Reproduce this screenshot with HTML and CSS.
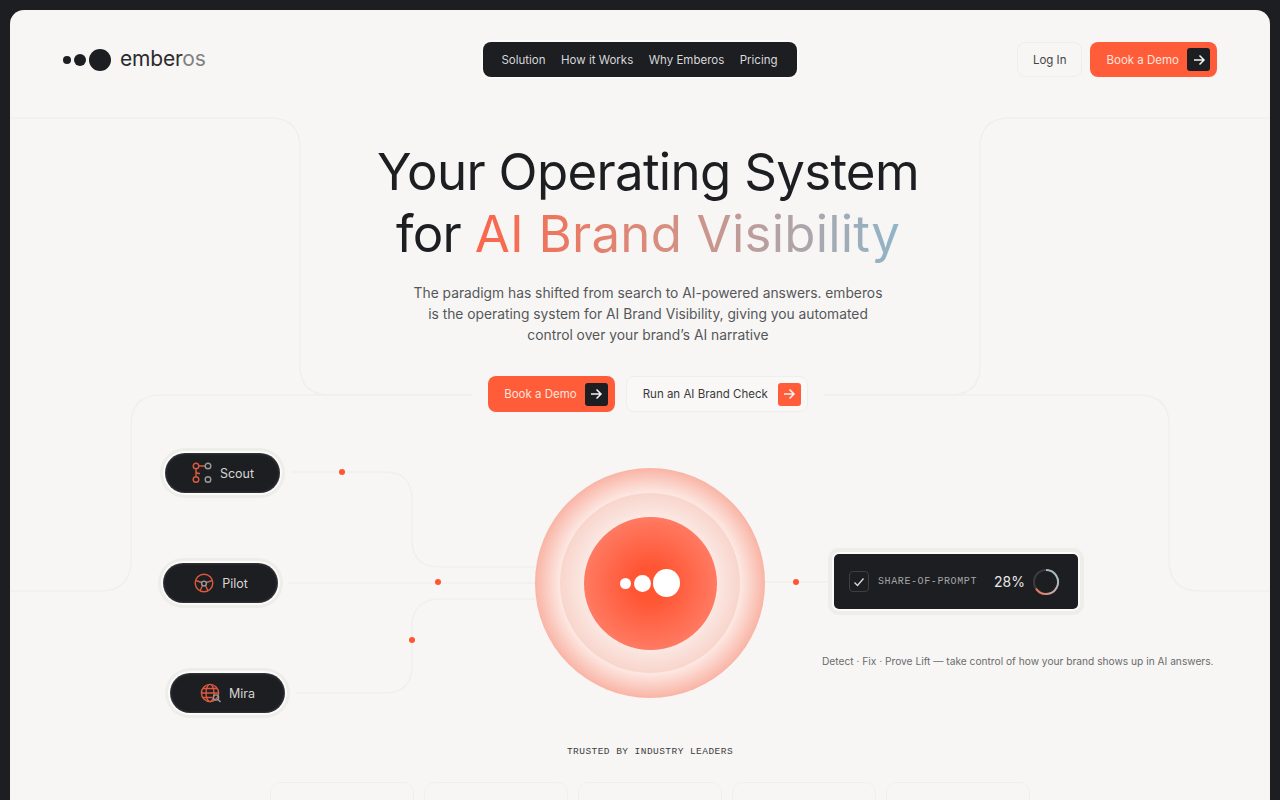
FILE: index.html
```html
<!DOCTYPE html>
<html lang="en">

<head>
    <meta charset="UTF-8">
    <meta name="viewport" content="width=device-width, initial-scale=1.0">
    <title>emberos</title>
    <link rel="stylesheet" href="styles.css">
</head>

<body>
    <div class="frame">
        <!-- background lines, coordinates are page coordinates -->
        <svg class="lines" width="1280" height="800" viewBox="0 0 1280 800" fill="none">
            <path class="line" d="M10 118H270Q300 118 300 148V365Q300 395 330 395H472"/>
            <path class="line" d="M824 395H950Q980 395 980 365V148Q980 118 1010 118H1270"/>
            <path class="line" d="M10 591H100Q131 591 131 560V425Q131 395 161 395H472"/>
            <path class="line" d="M824 395H1139Q1169 395 1169 425V560Q1169 591 1199 591H1270"/>
            <path class="line" d="M292 472H385Q412 472 412 500V540Q412 567 440 567H536"/>
            <path class="line" d="M288 583H536"/>
            <path class="line" d="M296 693H385Q412 693 412 665V627Q412 599 440 599H536"/>
            <path class="line" d="M764 582H830"/>
            <circle class="dot" cx="342" cy="472" r="3"/>
            <circle class="dot" cx="438" cy="582" r="3"/>
            <circle class="dot" cx="412" cy="640" r="3"/>
            <circle class="dot" cx="796" cy="582" r="3"/>
        </svg>

        <header class="header">
            <a class="logo" href="#">
                <span class="logo-dots">
                    <span class="logo-dot small"></span>
                    <span class="logo-dot medium"></span>
                    <span class="logo-dot large"></span>
                </span>
                <span class="logo-text">ember<span class="logo-os">os</span></span>
            </a>
            <nav class="nav">
                <a href="#">Solution</a>
                <a href="#">How it Works</a>
                <a href="#">Why Emberos</a>
                <a href="#">Pricing</a>
            </nav>
            <div class="header-actions">
                <a class="btn btn-ghost" href="#">Log In</a>
                <a class="btn btn-primary" href="#">Book a Demo
                    <span class="arrow arrow-dark">
                        <svg width="14" height="14" viewBox="0 0 14 14" fill="none"><path d="M2 7H12M7.5 2.5L12 7L7.5 11.5"/></svg>
                    </span>
                </a>
            </div>
        </header>

        <section class="hero">
            <h1>Your Operating System<br>for <span class="gradient-text">AI Brand Visibility</span></h1>
            <p>The paradigm has shifted from search to AI-powered answers. emberos<br>is the operating system for AI Brand Visibility, giving you automated<br>control over your brand’s AI narrative</p>
            <div class="hero-actions">
                <a class="btn btn-primary" href="#">Book a Demo
                    <span class="arrow arrow-dark">
                        <svg width="14" height="14" viewBox="0 0 14 14" fill="none"><path d="M2 7H12M7.5 2.5L12 7L7.5 11.5"/></svg>
                    </span>
                </a>
                <a class="btn btn-light" href="#">Run an AI Brand Check
                    <span class="arrow arrow-orange">
                        <svg width="14" height="14" viewBox="0 0 14 14" fill="none"><path d="M2 7H12M7.5 2.5L12 7L7.5 11.5"/></svg>
                    </span>
                </a>
            </div>
        </section>

        <section class="diagram">
            <div class="pill pill-scout">
                <svg class="pill-icon" width="22" height="22" viewBox="0 0 22 22" fill="none">
                    <g class="ic-orange">
                        <circle cx="5" cy="4" r="2.8"/>
                        <circle cx="5" cy="17.5" r="2.8"/>
                        <path d="M5 7V14.5M8 4H14M5 9Q5 11.5 8 11.5H9"/>
                    </g>
                    <g class="ic-grey">
                        <circle cx="17" cy="4" r="2.8"/>
                        <circle cx="17" cy="17.5" r="2.8"/>
                    </g>
                </svg>
                Scout
            </div>
            <div class="pill pill-pilot">
                <svg class="pill-icon" width="22" height="22" viewBox="0 0 22 22" fill="none">
                    <g class="ic-orange">
                        <circle cx="11" cy="11" r="8.8"/>
                        <path d="M2.6 8.5L8.8 10.5M13.2 10.5L19.4 8.5M9.6 13.2L7 19M12.4 13.2L15 19"/>
                    </g>
                    <circle class="ic-grey" cx="11" cy="11.5" r="2.4"/>
                </svg>
                Pilot
            </div>
            <div class="pill pill-mira">
                <svg class="pill-icon" width="22" height="22" viewBox="0 0 22 22" fill="none">
                    <g class="ic-orange">
                        <circle cx="10" cy="11" r="8.6"/>
                        <ellipse cx="10" cy="11" rx="4" ry="8.6"/>
                        <path d="M1.6 11H18.6M3 6.5H17M3 15.5H12"/>
                    </g>
                    <g class="ic-grey">
                        <circle cx="16" cy="15.5" r="2.6"/>
                        <path d="M18 17.5L20.5 20"/>
                    </g>
                </svg>
                Mira
            </div>

            <div class="core">
                <div class="core-mid">
                    <div class="core-inner">
                        <span class="core-dot small"></span>
                        <span class="core-dot medium"></span>
                        <span class="core-dot large"></span>
                    </div>
                </div>
            </div>

            <div class="metric">
                <span class="check">
                    <svg width="12" height="12" viewBox="0 0 12 12" fill="none"><path d="M1.5 6.5L4.5 9.5L10.5 2.5"/></svg>
                </span>
                <span class="metric-label">SHARE-OF-PROMPT</span>
                <span class="metric-value">28%</span>
                <svg class="metric-ring" width="28" height="28" viewBox="0 0 28 28" fill="none">
                    <defs>
                        <linearGradient id="ringGrad" x1="1" y1="0" x2="0" y2="1">
                            <stop offset="0" stop-color="#9fc0d0"/>
                            <stop offset="0.6" stop-color="#c9a9a0"/>
                            <stop offset="1" stop-color="#f0654a"/>
                        </linearGradient>
                    </defs>
                    <circle cx="14" cy="14" r="12" stroke="#3a3c41" stroke-width="2"/>
                    <path d="M14 2A12 12 0 1 1 4 20.6" stroke="url(#ringGrad)" stroke-width="2"/>
                </svg>
            </div>

            <p class="caption">Detect · Fix · Prove Lift — take control of how your brand shows up in AI answers.</p>
        </section>

        <p class="trusted">TRUSTED BY INDUSTRY LEADERS</p>
        <div class="logos">
            <div class="logo-card"></div>
            <div class="logo-card"></div>
            <div class="logo-card"></div>
            <div class="logo-card"></div>
            <div class="logo-card"></div>
        </div>
    </div>
</body>

</html>
```

FILE: styles.css
```css
* {
    box-sizing: border-box;
}

html,
body {
    height: 100%;
}

body {
    margin: 0;
    padding: 10px 10px 0;
    overflow: hidden;
    background-color: #1c1e22;
    font-family: Inter, "Liberation Sans", sans-serif;
    color: #1c1e22;
}

a {
    color: inherit;
    text-decoration: none;
}

.frame {
    position: relative;
    height: 790px;
    overflow: hidden;
    background-color: #f7f6f4;
    border-radius: 14px 14px 0 0;
}

.lines {
    position: absolute;
    left: -10px;
    top: -10px;
}

.line {
    stroke: #f0efec;
    stroke-width: 1.5;
}

.dot {
    fill: #ff5533;
}

/* header */
.header {
    position: relative;
    display: grid;
    grid-template-columns: 1fr auto 1fr;
    align-items: center;
    padding: 32px 53px 0;
}

.logo {
    display: flex;
    align-items: center;
    gap: 9px;
}

.logo-dots {
    display: flex;
    align-items: center;
    gap: 3px;
}

.logo-dot {
    display: block;
    border-radius: 50%;
    background-color: #1c1e22;
}

.logo-dot.small {
    width: 8px;
    height: 8px;
}

.logo-dot.medium {
    width: 12px;
    height: 12px;
}

.logo-dot.large {
    width: 22px;
    height: 22px;
}

.logo-text {
    margin-top: -2px;
    font-size: 21px;
    letter-spacing: -0.2px;
    color: #2a2b2e;
}

.logo-os {
    color: #808083;
}

.nav {
    display: flex;
    align-items: center;
    gap: 15.5px;
    height: 35px;
    padding: 0 19px 0 18px;
    background-color: #1c1e22;
    border-radius: 8px;
    box-shadow: 0 0 0 2px rgba(255, 255, 255, 0.6);
    font-size: 11.5px;
    color: #d8d8d8;
}

.header-actions {
    display: flex;
    justify-content: flex-end;
    gap: 8px;
}

.btn {
    display: flex;
    align-items: center;
    height: 36px;
    border-radius: 8px;
    font-size: 11.5px;
    white-space: nowrap;
}

.header .btn {
    height: 35px;
}

.btn-ghost {
    padding: 0 15px;
    border: 1px solid #efeeeb;
    color: #444;
}

.btn-primary {
    gap: 8px;
    padding: 0 7px 0 16px;
    background-color: #ff5c3a;
    color: #ffe4dc;
}

.btn-light {
    gap: 10px;
    padding: 0 6px 0 16px;
    background-color: #f9f8f7;
    border: 1px solid #efeeeb;
    color: #3a3a3c;
}

.arrow {
    display: flex;
    align-items: center;
    justify-content: center;
    width: 23px;
    height: 23px;
    border-radius: 3px;
}

.arrow path {
    stroke: #f3f3f3;
    stroke-width: 1.5;
}

.arrow-dark {
    background-color: #1c1e22;
}

.arrow-orange {
    background-color: #ff5c3a;
}

/* hero */
.hero {
    position: relative;
    padding: 64px 0 0 16px;
    text-align: center;
}

.hero h1 {
    margin: 0;
    font-size: 51px;
    font-weight: 400;
    line-height: 62px;
    letter-spacing: -0.7px;
}

.gradient-text {
    background: linear-gradient(90deg, #fb654a 0%, #d68f80 45%, #8fb5c9 100%);
    -webkit-background-clip: text;
    background-clip: text;
    letter-spacing: 0.2px;
    color: transparent;
}

.hero p {
    margin: 18px 0 0;
    font-size: 13.8px;
    line-height: 21px;
    color: #55565a;
}

.hero-actions {
    display: flex;
    justify-content: center;
    gap: 11px;
    margin-top: 30px;
}

/* diagram, nodes sit on a free canvas */
.diagram {
    position: relative;
    height: 318px;
}

.pill {
    position: absolute;
    display: flex;
    align-items: center;
    justify-content: center;
    gap: 7px;
    width: 115px;
    height: 40px;
    background-color: #1d1e22;
    border-radius: 20px;
    box-shadow: inset 0 0 3px rgba(255, 255, 255, 0.25), 0 0 0 2px #fbfbfa, 0 0 0 5px #eeedea;
    font-size: 12.5px;
    color: #d5d5d5;
}

.pill-scout {
    left: 155px;
    top: 41px;
}

.pill-pilot {
    left: 153px;
    top: 151px;
}

.pill-mira {
    left: 160px;
    top: 261px;
}

.ic-orange {
    stroke: #d95a3e;
    stroke-width: 1.4;
}

.ic-grey {
    stroke: #9a9a9c;
    stroke-width: 1.4;
}

.core {
    position: absolute;
    left: 525px;
    top: 56px;
    display: flex;
    align-items: center;
    justify-content: center;
    width: 230px;
    height: 230px;
    border-radius: 50%;
    background: radial-gradient(circle closest-side, #fdeeea 76%, #f9b4a5 100%);
}

.core-mid {
    display: flex;
    align-items: center;
    justify-content: center;
    width: 180px;
    height: 180px;
    border-radius: 50%;
    background: radial-gradient(circle closest-side, #fbe9e4 72%, #f8d5cc 100%);
}

.core-inner {
    display: flex;
    align-items: center;
    justify-content: center;
    gap: 2.5px;
    width: 133px;
    height: 133px;
    border-radius: 50%;
    background: radial-gradient(circle closest-side, #ff5533 25%, #ff7a62 100%);
}

.core-dot {
    display: block;
    border-radius: 50%;
    background-color: #fff;
}

.core-dot.small {
    width: 11px;
    height: 11px;
}

.core-dot.medium {
    width: 17px;
    height: 17px;
}

.core-dot.large {
    width: 27px;
    height: 28px;
}

.metric {
    position: absolute;
    left: 824px;
    top: 142px;
    display: flex;
    align-items: center;
    width: 244px;
    height: 55px;
    padding: 0 15px;
    background-color: #1c1e22;
    border-radius: 5px;
    box-shadow: 0 0 0 2px #fbfbfa, 0 0 0 6px #eeedea;
    color: #e8e8e8;
}

.check {
    display: flex;
    align-items: center;
    justify-content: center;
    width: 20px;
    height: 21px;
    border: 1px solid #3d3f44;
    border-radius: 4px;
}

.check path {
    stroke: #d8d8d8;
    stroke-width: 1.4;
}

.metric-label {
    margin-left: 9px;
    font-family: "Liberation Mono", monospace;
    font-size: 10px;
    letter-spacing: 0.6px;
    color: #a5a5a7;
}

.metric-value {
    margin-left: 17px;
    font-size: 14px;
}

.metric-ring {
    margin-left: 7px;
}

.caption {
    position: absolute;
    left: 812px;
    top: 241px;
    margin: 0;
    font-size: 10.2px;
    line-height: 16px;
    white-space: nowrap;
    color: #6a6b6e;
}

.trusted {
    position: relative;
    margin: 16px 0 0 20px;
    font-family: "Liberation Mono", monospace;
    font-size: 9.5px;
    line-height: 12px;
    letter-spacing: 0.45px;
    text-align: center;
    color: #3d3e41;
}

.logos {
    position: relative;
    display: flex;
    justify-content: center;
    gap: 10px;
    margin: 24px 0 0 20px;
    -webkit-mask-image: linear-gradient(90deg, transparent 0, #000 15%, #000 85%, transparent 100%);
    mask-image: linear-gradient(90deg, transparent 0, #000 15%, #000 85%, transparent 100%);
}

.logo-card {
    width: 144px;
    height: 60px;
    border: 1.5px solid #f0efec;
    border-radius: 10px;
}
```
